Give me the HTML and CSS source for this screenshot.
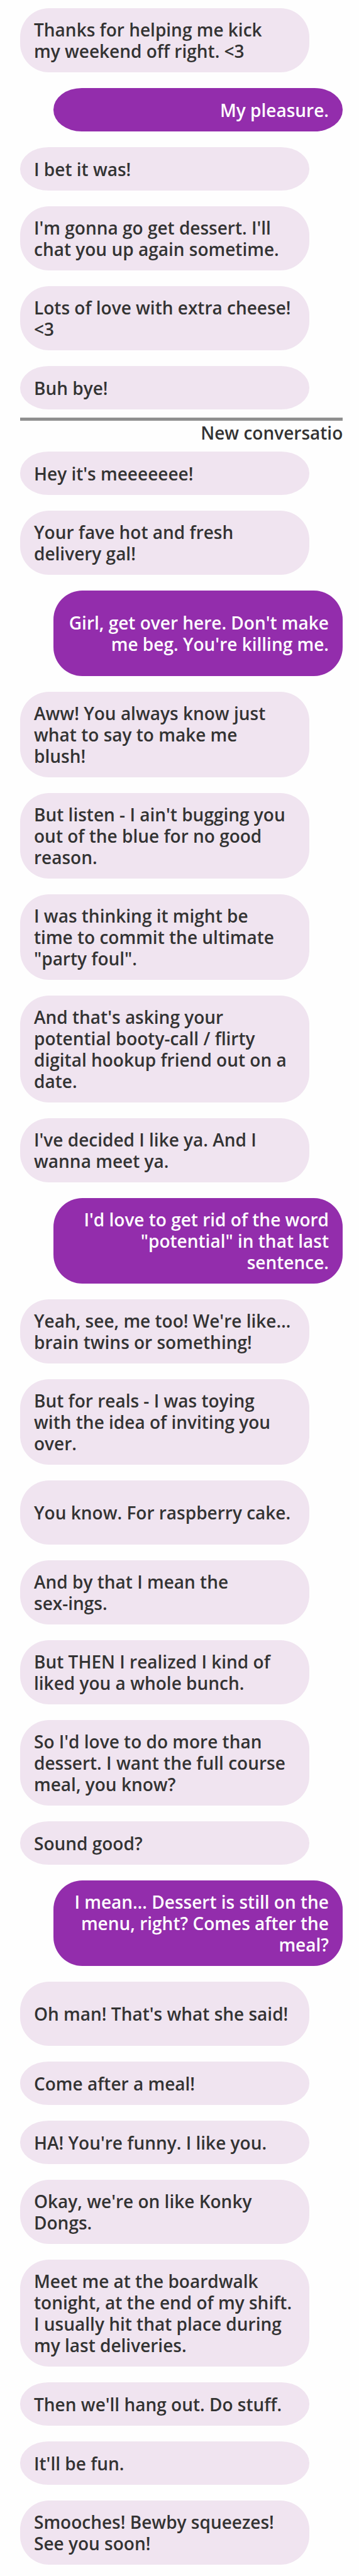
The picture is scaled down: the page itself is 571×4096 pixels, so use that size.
FILE: index.html
```html
<!DOCTYPE html>
<html lang="en">
<head>
<meta charset="utf-8">
<meta name="viewport" content="width=device-width, initial-scale=1">
<title>Conversation</title>
<link rel="stylesheet" href="styles.css">
</head>
<body>
<main class="chat">
  <p class="msg">Thanks for helping me kick<br>my weekend off right. &lt;3</p>
  <p class="msg mine short">My pleasure.</p>
  <p class="msg short">I bet it was!</p>
  <p class="msg">I'm gonna go get dessert. I'll<br>chat you up again sometime.</p>
  <p class="msg">Lots of love with extra cheese!<br>&lt;3</p>
  <p class="msg short">Buh bye!</p>
  <div class="divider"><span class="divider-label">New conversation</span></div>
  <p class="msg short">Hey it's meeeeeee!</p>
  <p class="msg">Your fave hot and fresh<br>delivery gal!</p>
  <p class="msg mine three">Girl, get over here. Don't make<br>me beg. You're killing me.</p>
  <p class="msg">Aww! You always know just<br>what to say to make me<br>blush!</p>
  <p class="msg">But listen - I ain't bugging you<br>out of the blue for no good<br>reason.</p>
  <p class="msg">I was thinking it might be<br>time to commit the ultimate<br>"party foul".</p>
  <p class="msg">And that's asking your<br>potential booty-call / flirty<br>digital hookup friend out on a<br>date.</p>
  <p class="msg">I've decided I like ya. And I<br>wanna meet ya.</p>
  <p class="msg mine">I'd love to get rid of the word<br>"potential" in that last<br>sentence.</p>
  <p class="msg">Yeah, see, me too! We're like…<br>brain twins or something!</p>
  <p class="msg">But for reals - I was toying<br>with the idea of inviting you<br>over.</p>
  <p class="msg two">You know. For raspberry cake.</p>
  <p class="msg">And by that I mean the<br>sex-ings.</p>
  <p class="msg">But THEN I realized I kind of<br>liked you a whole bunch.</p>
  <p class="msg">So I'd love to do more than<br>dessert. I want the full course<br>meal, you know?</p>
  <p class="msg short">Sound good?</p>
  <p class="msg mine">I mean… Dessert is still on the<br>menu, right? Comes after the<br>meal?</p>
  <p class="msg two">Oh man! That's what she said!</p>
  <p class="msg short">Come after a meal!</p>
  <p class="msg short">HA! You're funny. I like you.</p>
  <p class="msg">Okay, we're on like Konky<br>Dongs.</p>
  <p class="msg">Meet me at the boardwalk<br>tonight, at the end of my shift.<br>I usually hit that place during<br>my last deliveries.</p>
  <p class="msg short">Then we'll hang out. Do stuff.</p>
  <p class="msg short">It'll be fun.</p>
  <p class="msg">Smooches! Bewby squeezes!<br>See you soon!</p>
</main>
</body>
</html>
```
FILE: styles.css
```css
* { box-sizing: border-box; }

body {
  margin: 0;
  background: #fefefe;
  color: #333333;
  font-family: "Open Sans", "Liberation Sans", sans-serif;
  font-size: 28px;
  font-weight: 600;
  line-height: 34px;
}

.chat {
  display: flex;
  flex-direction: column;
  gap: 25px;
  padding: 13px 26px 20px 32px;
}

.msg {
  display: flow-root;
  align-self: flex-start;
  align-content: center;
  width: calc(100% - 53px);
  min-height: 69px;
  margin: 0;
  padding: 17px 22px;
  border-radius: 46px;
  background: #f0e4f0;
  white-space: nowrap;
}

.mine {
  align-self: flex-end;
  background: #932dac;
  color: #ffffff;
  text-align: right;
}

.short { border-radius: 45px / 34px; }

.two { min-height: 102px; }

.three { min-height: 136px; }

.divider {
  margin: -12px 0;
  padding-top: 2px;
  border-top: 5px solid #8f8f8f;
  overflow: hidden;
  white-space: nowrap;
}

.divider-label {
  display: block;
  margin-left: 56%;
}
```
